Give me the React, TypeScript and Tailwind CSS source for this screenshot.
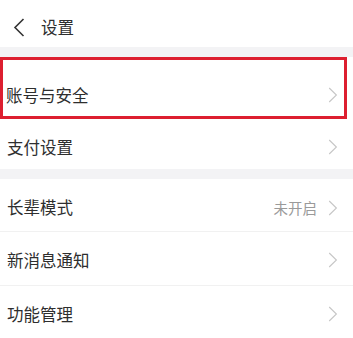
import React from "react";

const Chevron = () => (
  <svg width="10" height="16" viewBox="0 0 10 16" fill="none">
    <path d="M1.2 1 L8.4 8 L1.2 15" stroke="#c6c6c6" strokeWidth="1.1" />
  </svg>
);

function Row({
  label,
  value,
  extra,
}: {
  label: string;
  value?: string;
  extra?: string;
}) {
  return (
    <div className={`flex items-center justify-between bg-white pl-[7px] pr-[15px] ${extra ?? ""}`}>
      <span className="text-[16.5px] text-[#2e2e2e]">{label}</span>
      <div className="flex items-center gap-[11px]">
        {value && <span className="text-[14.5px] text-[#9a9a9a]">{value}</span>}
        <Chevron />
      </div>
    </div>
  );
}

export default function App() {
  return (
    <div
      className="w-[353px] h-[338px] overflow-hidden bg-white"
      style={{ fontFamily: '"Noto Sans CJK SC", "Noto Sans", sans-serif' }}
    >
      <div className="flex h-[47px] items-center bg-white pl-[13px] pt-[8px]">
        <svg width="12" height="19" viewBox="0 0 12 19" fill="none">
          <path d="M10.5 1 L2 9.5 L10.5 18" stroke="#333333" strokeWidth="1.6" />
        </svg>
        <span className="ml-[16px] text-[16.5px] text-[#2e2e2e]">设置</span>
      </div>
      <div className="h-[10px] bg-[#f3f3f5]" />
      <div className="bg-white">
        <div className="w-[347px] border-[3.5px] border-[#dd1f30]">
          <div className="flex h-[56px] items-center justify-between pl-[3px] pr-[6px] pt-[14px]">
            <span className="text-[16.5px] text-[#2e2e2e]">账号与安全</span>
            <Chevron />
          </div>
        </div>
      </div>
      <Row label="支付设置" extra="h-[50px] pt-[6px]" />
      <div className="h-[10px] bg-[#f3f3f5]" />
      <Row label="长辈模式" value="未开启" extra="h-[53px] pt-[5px] border-b border-[#f1f1f1]" />
      <Row label="新消息通知" extra="h-[54px] pt-[3px] border-b border-[#f1f1f1]" />
      <Row label="功能管理" extra="h-[53px] pt-[3px]" />
    </div>
  );
}
